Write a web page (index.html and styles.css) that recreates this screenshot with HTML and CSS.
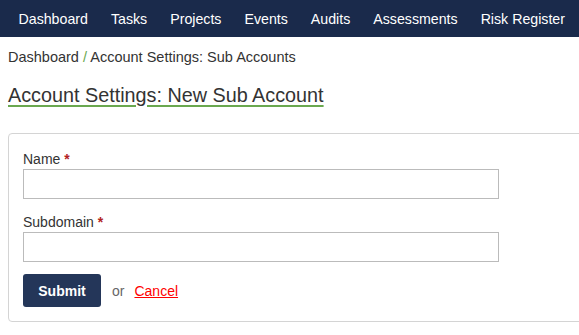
FILE: index.html
```html
<!DOCTYPE html>
<html lang="en">
<head>
  <meta charset="UTF-8" />
  <title>Account Settings: New Sub Account</title>
  <link rel="stylesheet" href="styles.css">
</head>
<body>
  <nav class="top-nav">
    <a href="#">Dashboard</a>
    <a href="#">Tasks</a>
    <a href="#">Projects</a>
    <a href="#">Events</a>
    <a href="#">Audits</a>
    <a href="#">Assessments</a>
    <a href="#">Risk Register</a>
  </nav>

  <div class="page">
    <div class="breadcrumb">
      <a href="#">Dashboard</a> <span class="sep">/</span> Account Settings: Sub Accounts
    </div>

    <h1 class="page-title">Account Settings: New Sub Account</h1>

    <form class="card">
      <div class="field">
        <label for="name">Name <span class="req">*</span></label>
        <input type="text" id="name" />
      </div>
      <div class="field">
        <label for="subdomain">Subdomain <span class="req">*</span></label>
        <input type="text" id="subdomain" />
      </div>
      <div class="actions">
        <button type="submit" class="btn-primary">Submit</button>
        <span class="or">or</span>
        <a href="#" class="cancel">Cancel</a>
      </div>
    </form>
  </div>
</body>
</html>
```

FILE: styles.css
```css
* { box-sizing: border-box; }
body {
  font-family: 'Liberation Sans', Arial, sans-serif;
  font-size: 14px;
  color: #333;
  margin: 0;
  background: #fff;
  overflow: hidden;
}
.top-nav {
  background: #1a2a4b;
  height: 37px;
  display: flex;
  align-items: center;
  padding: 0 7px;
  white-space: nowrap;
}
.top-nav a {
  color: #fff;
  text-decoration: none;
  font-size: 14.2px;
  padding: 0 11.5px;
}
.page {
  padding: 10px 8px 0;
}
.breadcrumb {
  font-size: 14.5px;
  color: #333;
  line-height: 20px;
}
.breadcrumb a {
  color: #333;
  text-decoration: none;
}
.breadcrumb .sep {
  color: #6aa84f;
}
.page-title {
  font-size: 19.8px;
  font-weight: normal;
  color: #333;
  line-height: 23px;
  margin: 17px 0 26px;
  text-decoration: underline;
  text-decoration-color: #6aa84f;
  text-decoration-thickness: 2px;
  text-underline-offset: 3px;
}
.card {
  width: 600px;
  border: 1px solid #d4d4d4;
  border-radius: 4px;
  padding: 15px 14px 14px;
}
.field {
  margin-bottom: 13px;
}
.field label {
  display: block;
  line-height: 20px;
}
.req {
  color: #b22222;
  font-weight: bold;
}
.field input {
  display: block;
  width: 476px;
  height: 30px;
  border: 1px solid #bbb;
  border-radius: 0;
  font-size: 14px;
  padding: 4px 6px;
}
.field + .actions {
  margin-top: -1px;
}
.actions {
  display: flex;
  align-items: center;
  gap: 11px;
}
.btn-primary {
  background: #243659;
  color: #fff;
  border: none;
  border-radius: 3px;
  font-family: inherit;
  font-size: 14px;
  font-weight: bold;
  width: 78px;
  height: 33px;
}
.or {
  color: #666;
  margin-right: -1px;
}
.cancel {
  color: #f00;
}
```
